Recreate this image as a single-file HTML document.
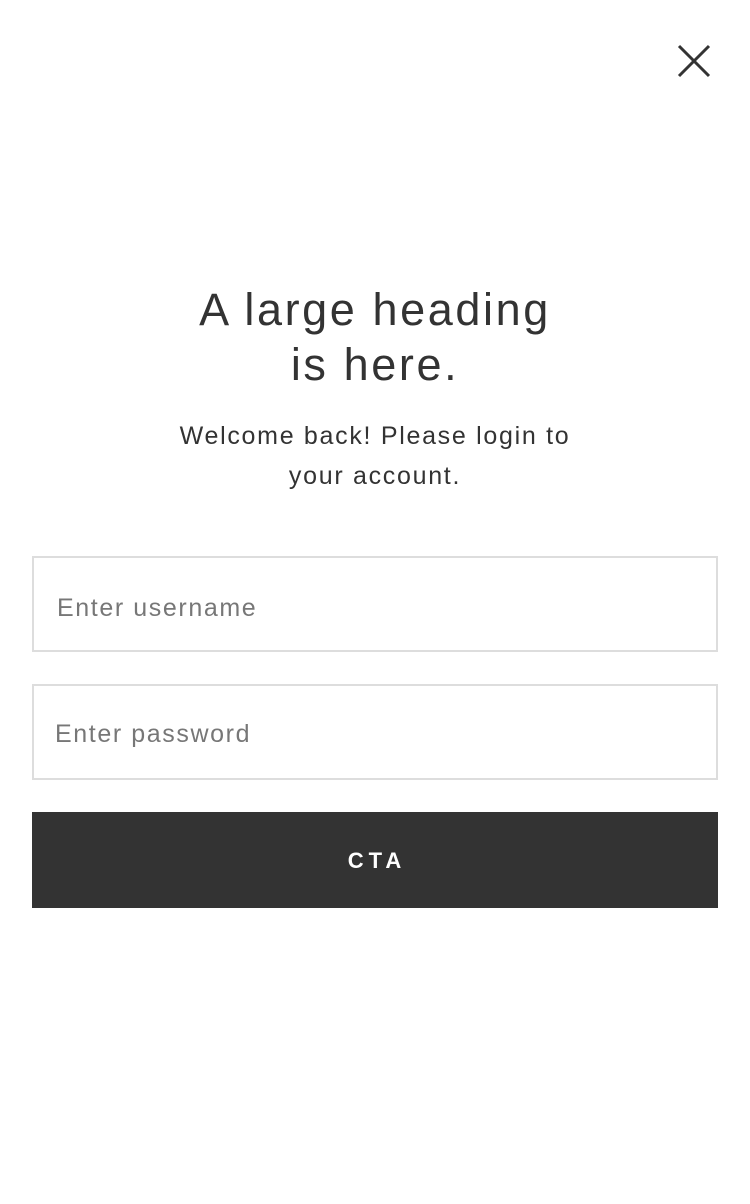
<!DOCTYPE html>
<html><head><meta charset="utf-8"><style>
body{margin:0;width:750px;height:1204px;background:#fff;font-family:"Liberation Sans",sans-serif;color:#333;position:relative;overflow:hidden}
.x{position:absolute;left:676px;top:43px}
h1{position:absolute;top:282px;left:0;width:750px;text-align:center;margin:0;font-size:45px;line-height:55px;font-weight:normal;color:#333;letter-spacing:2.6px}
p{position:absolute;top:416px;left:0;width:750px;text-align:center;margin:0;font-size:25px;line-height:40px;color:#333;letter-spacing:1.7px}
.in{position:absolute;left:32px;width:682px;height:92px;border:2px solid #ddd;font-size:25px;color:#777;box-sizing:content-box;letter-spacing:1.6px}
.in span{position:absolute;left:23px;top:34px}
.btn{position:absolute;left:32px;top:812px;width:686px;height:96px;background:#333;color:#fff;font-size:22px;font-weight:bold;letter-spacing:5px;text-indent:4px;text-align:center;line-height:98px}
</style></head><body>
<svg class="x" width="36" height="36" viewBox="0 0 36 36"><path d="M3 3L33 33M33 3L3 33" stroke="#333" stroke-width="3"/></svg>
<h1>A large heading<br>is here.</h1>
<p>Welcome back! Please login to<br>your account.</p>
<div class="in" style="top:556px"><span style="top:36px">Enter username</span></div>
<div class="in" style="top:684px"><span style="left:21px">Enter password</span></div>
<div class="btn">CTA</div>
</body></html>
